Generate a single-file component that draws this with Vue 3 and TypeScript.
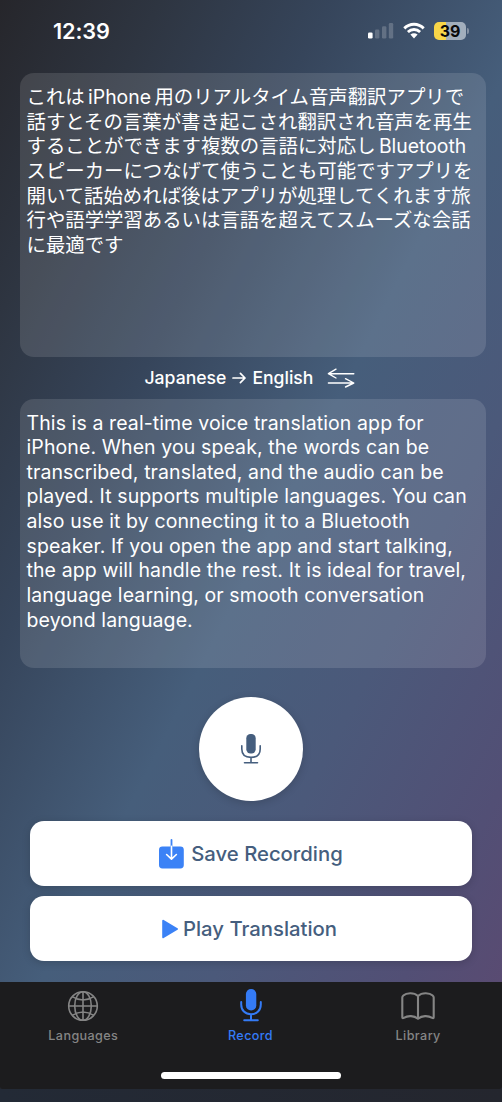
<script setup lang="ts">
const sourceLines: string[][] = [
  ['これは', 'iPhone', '用のリアルタイム音声翻訳アプリで'],
  ['話すとその言葉が書き起こされ翻訳され音声を再生'],
  ['することができます複数の言語に対応し', 'Bluetooth'],
  ['スピーカーにつなげて使うことも可能ですアプリを'],
  ['開いて話始めれば後はアプリが処理してくれます旅'],
  ['行や語学学習あるいは言語を超えてスムーズな会話'],
  ['に最適です'],
]

const translatedLines: string[] = [
  'This is a real-time voice translation app for',
  'iPhone. When you speak, the words can be',
  'transcribed, translated, and the audio can be',
  'played. It supports multiple languages. You can',
  'also use it by connecting it to a Bluetooth',
  'speaker. If you open the app and start talking,',
  'the app will handle the rest. It is ideal for travel,',
  'language learning, or smooth conversation',
  'beyond language.',
]
</script>

<template>
  <div class="screen">
    <main class="app">
      <header class="status">
        <span class="clock">12:39</span>
        <div class="indicators">
          <svg class="signal" width="26" height="17" viewBox="0 0 26 17">
            <rect x="0" y="10.5" width="4.6" height="6" rx="1.3" fill="#fff" />
            <rect x="7" y="7.5" width="4.4" height="9" rx="1.3" fill="#fff" opacity=".2" />
            <rect x="14" y="4.2" width="4.4" height="12.3" rx="1.3" fill="#fff" opacity=".2" />
            <rect x="20.8" y="1" width="4.4" height="15.5" rx="1.3" fill="#fff" opacity=".2" />
          </svg>
          <svg class="wifi" width="22" height="17" viewBox="0 0 22 17">
            <g fill="none" stroke="#fff" stroke-width="2.9">
              <path d="M1.3 6.4C6.8 .9 15.2 .9 20.7 6.4" />
              <path d="M4.9 10C8.5 6.7 13.5 6.7 17.1 10" />
            </g>
            <path d="M7.4 12.6Q11 9.7 14.6 12.6L11 16.4Z" fill="#fff" />
          </svg>
          <div class="battery">
            <span class="level">39</span>
            <i class="nub"></i>
          </div>
        </div>
      </header>

      <section class="card source">
        <p v-for="(line, i) in sourceLines" :key="i" class="line ja">
          <span v-for="part in line" :key="part">{{ part }}</span>
        </p>
      </section>

      <div class="direction">
        <span class="pair">Japanese</span>
        <svg width="15" height="12" viewBox="0 0 15 12" fill="none" stroke="#fff" stroke-width="1.7" stroke-linecap="round" stroke-linejoin="round">
          <path d="M1 6H13M8.4 1.4L13 6L8.4 10.6" />
        </svg>
        <span class="pair english">English</span>
        <svg class="swap" width="28" height="20" viewBox="0 0 28 20" fill="none" stroke="#fff" stroke-width="1.4" stroke-linecap="round" stroke-linejoin="round">
          <path d="M26.8 5.7H1.4L9 1.2M1.4 5.7L9 10M1.4 15H26.8L18.5 10.7M26.8 15L18.5 19" />
        </svg>
      </div>

      <section class="card result">
        <p v-for="line in translatedLines" :key="line" class="line en">{{ line }}</p>
      </section>

      <div class="controls">
        <button class="mic" aria-label="Record">
          <svg width="20" height="30" viewBox="0 0 20 30">
            <rect x="5.3" y="0" width="9.4" height="19.4" rx="4.2" fill="#455e7e" />
            <path d="M.8 11.8V15C.8 20.6 4.6 23.4 10 23.4S19.2 20.6 19.2 15V11.8M10 23.4V28.5M3.5 28.7H16.5" fill="none" stroke="#455e7e" stroke-width="1.6" stroke-linecap="round" />
          </svg>
        </button>
        <button class="action">
          <svg class="save" width="25" height="30" viewBox="0 0 25 30">
            <path d="M12.5 1V10" stroke="#3b82f6" stroke-width="1.8" stroke-linecap="round" />
            <rect x="0" y="7.4" width="24.8" height="22" rx="3.4" fill="#3b82f6" />
            <path d="M12.5 7.4V20M7.6 15.5L12.5 20.2L17.4 15.5" fill="none" stroke="#fff" stroke-width="1.6" stroke-linecap="round" stroke-linejoin="round" />
          </svg>
          <span class="save-label">Save Recording</span>
        </button>
        <button class="action">
          <svg class="play" width="17" height="20" viewBox="0 0 17 20">
            <path d="M1.2 1.8L15 10L1.2 18.2Z" fill="#3b82f6" stroke="#3b82f6" stroke-width="2" stroke-linejoin="round" />
          </svg>
          <span class="play-label">Play Translation</span>
        </button>
      </div>
    </main>

    <nav class="tabs">
      <a class="tab">
        <svg width="32" height="34" viewBox="0 0 32 34" fill="none" stroke="#858585" stroke-width="1.6">
          <circle cx="16" cy="17" r="14.3" />
          <ellipse cx="16" cy="17" rx="8.3" ry="14.3" />
          <path d="M16 2.7V31.3M1.7 17H30.3M5.2 7.6Q16 14.4 26.8 7.6M5.2 26.4Q16 19.6 26.8 26.4" />
        </svg>
        <span class="languages">Languages</span>
      </a>
      <a class="tab active">
        <svg width="24" height="34" viewBox="0 0 24 34">
          <rect x="6.9" y="0" width="10.4" height="21.6" rx="5.1" fill="#347bf6" />
          <path d="M2.2 13V15.5C2.2 21.3 6.2 25.2 12 25.2S21.8 21.3 21.8 15.5V13M12 25.2V31M5.2 31.2H18.8" fill="none" stroke="#347bf6" stroke-width="2" stroke-linecap="round" />
        </svg>
        <span>Record</span>
      </a>
      <a class="tab">
        <svg width="34" height="34" viewBox="0 0 34 34" fill="none" stroke="#858585" stroke-width="2.1" stroke-linecap="round" stroke-linejoin="round">
          <path d="M17 7C13 3.4 5.5 3.6 2.3 6.6Q1.3 7.3 1.3 8.6V28.2Q1.3 29.7 2.8 28.8C7 26.4 13 26.5 17 29.8C21 26.5 27 26.4 31.2 28.8Q32.7 29.7 32.7 28.2V8.6Q32.7 7.3 31.7 6.6C28.5 3.6 21 3.4 17 7ZM17 7V29.5" />
        </svg>
        <span>Library</span>
      </a>
    </nav>
    <footer class="home"><i class="home-bar"></i></footer>
    <div class="bottom-strip"></div>
  </div>
</template>

<style>
html,
body {
  margin: 0;
  background: #24272f;
}
</style>

<style scoped>
.screen {
  display: flex;
  flex-direction: column;
  width: 502px;
  height: 1102px;
  overflow: hidden;
  font-family: Inter, "Noto Sans CJK JP", sans-serif;
  color: #fff;
}

.app {
  box-sizing: border-box;
  height: 982px;
  flex: none;
  background: linear-gradient(to bottom right, #26262b 0%, #2e3541 16%, #36455b 33%, #465e7b 54%, #4b597a 71%, #524f75 90%, #594b72 100%);
}

.status {
  display: flex;
  justify-content: space-between;
  height: 73px;
  box-sizing: border-box;
  padding: 18px 33px 0 53px;
}

.clock {
  font-size: 21.7px;
  line-height: 26px;
  font-weight: 600;
  letter-spacing: -0.1px;
}

.indicators {
  display: flex;
  align-items: flex-start;
  padding-top: 4px;
}

.signal {
  margin-right: 9px;
}

.wifi {
  margin-right: 9px;
}

.battery {
  display: flex;
  align-items: center;
  gap: 1px;
}

.level {
  width: 32px;
  height: 18px;
  border-radius: 5px;
  background: linear-gradient(to right, #f8d648 39%, #a2aebc 39%);
  color: #0a0a0a;
  font-size: 16px;
  line-height: 18px;
  font-weight: 700;
  text-align: center;
}

.nub {
  width: 2px;
  height: 6px;
  border-radius: 0 2px 2px 0;
  background: #8491a3;
}

.card {
  box-sizing: border-box;
  width: 466px;
  margin-left: 20px;
  border-radius: 14px;
  background: rgba(255, 255, 255, 0.12);
}

.source {
  height: 283.5px;
  padding: 12px 7px 0 6.5px;
}

.result {
  height: 269px;
  padding: 11.5px 7px 0 6.5px;
}

.line {
  margin: 0;
  height: 24.65px;
  line-height: 24.65px;
  white-space: nowrap;
}

.ja {
  display: flex;
  gap: 3.4px;
  font-size: 19.4px;
}

.en {
  font-size: 19.5px;
  letter-spacing: 0.1px;
}

.direction {
  display: flex;
  align-items: center;
  height: 42.5px;
  padding-left: 144.5px;
}

.pair {
  font-size: 17.6px;
  font-weight: 500;
  margin-right: 6px;
}

.english {
  margin: 0 14px 0 5px;
}

.controls {
  display: flex;
  flex-direction: column;
  align-items: center;
  padding-top: 29px;
}

button {
  border: 0;
  padding: 0;
  background: #fff;
  font: inherit;
}

.mic {
  display: grid;
  place-items: center;
  width: 104px;
  height: 104px;
  margin-bottom: 20px;
  border-radius: 50%;
  box-shadow: 0 2px 8px rgba(0, 0, 0, 0.16);
}

.action {
  display: flex;
  align-items: center;
  justify-content: center;
  width: 442px;
  height: 65px;
  margin-bottom: 10px;
  border-radius: 14px;
  box-shadow: 0 2px 8px rgba(0, 0, 0, 0.16);
  color: #455e7e;
  font-size: 20.3px;
  font-weight: 500;
}

.save {
  margin-right: 7px;
}

.play {
  margin-right: 4px;
}

.play-label {
  margin-right: 3px;
}

.tabs {
  display: flex;
  flex: none;
  height: 90px;
  background: #1c1c1e;
}

.tab {
  display: flex;
  flex-direction: column;
  align-items: center;
  width: 168px;
  margin-left: -0.5px;
  padding-top: 7px;
  color: #858585;
  font-size: 12.6px;
  line-height: 16px;
  font-weight: 500;
  letter-spacing: 0.4px;
}

.tab:last-child {
  margin-left: 0;
}

.tab svg {
  margin-bottom: 5px;
}

.tab.active {
  color: #347bf6;
}

.home {
  display: flex;
  justify-content: center;
  height: 17px;
  flex: none;
  border-radius: 0 0 3px 3px;
  background: #1c1c1e;
}

.home-bar {
  width: 180px;
  height: 6.5px;
  border-radius: 4px;
  background: #fff;
}

.bottom-strip {
  height: 13px;
  background: linear-gradient(to right, #232a36, #24262e);
}
</style>
